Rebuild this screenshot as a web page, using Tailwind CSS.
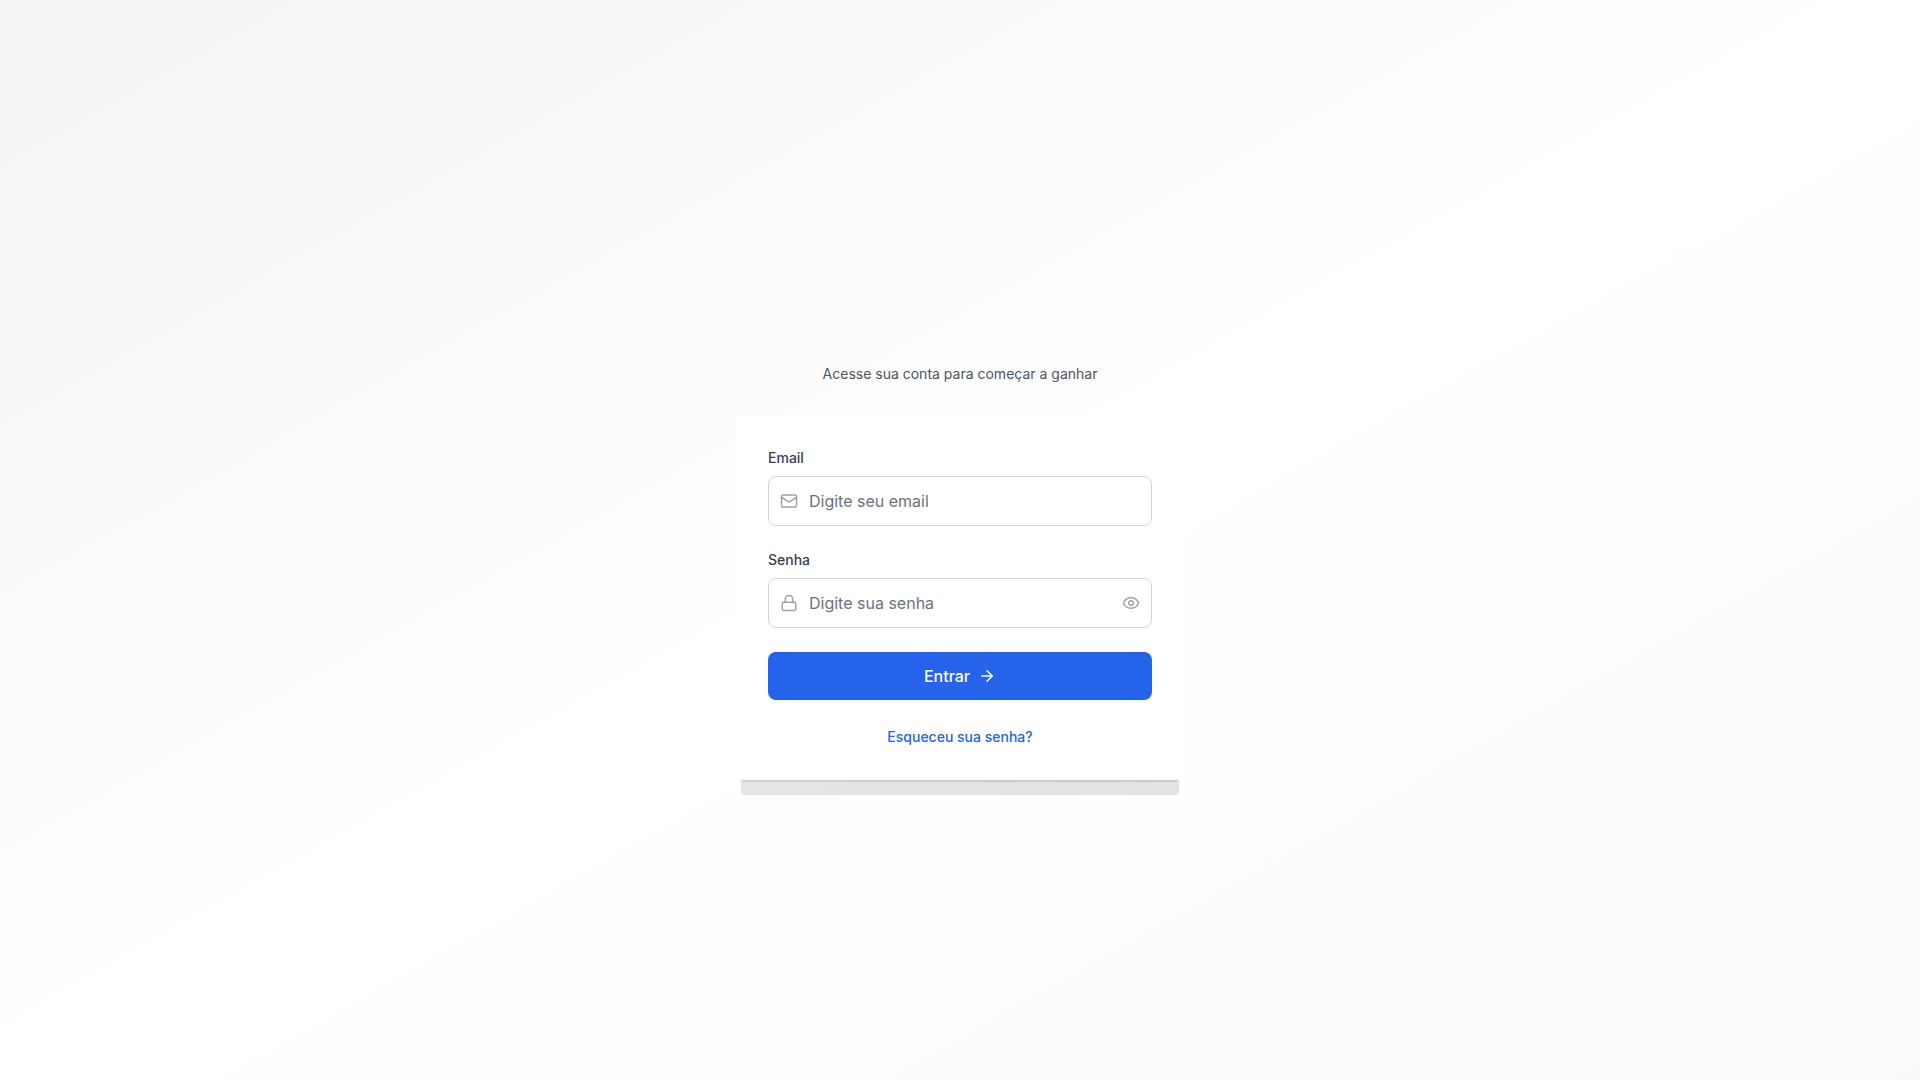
<!DOCTYPE html>
<html lang="pt-BR">
<head>
  <meta charset="UTF-8" />
  <meta name="viewport" content="width=device-width, initial-scale=1" />
  <title>Entrar</title>
  <script src="https://cdn.jsdelivr.net/npm/@tailwindcss/browser@4"></script>
</head>
<body class="min-h-screen flex items-center justify-center bg-linear-to-br/srgb from-[#f3f4f6] via-white to-[#f9fafb] font-['Inter',sans-serif]">
  <main class="w-full max-w-md pt-16">
    <p class="mb-8 text-center text-sm text-[#4b5563]">Acesse sua conta para começar a ganhar</p>

    <div class="p-8 bg-white rounded-lg shadow-[0_20px_0_-5px_rgba(0,0,0,0.1),0_8px_0_-6px_rgba(0,0,0,0.1)]">
      <form class="space-y-6">
        <div>
          <label for="email" class="block mb-2 text-sm font-medium text-[#374151]">Email</label>
          <div class="relative">
            <svg class="absolute left-3 inset-y-0 my-auto size-[18px] text-[#9ca3af]" viewBox="0 0 24 24" fill="none" stroke="currentColor" stroke-width="2" stroke-linecap="round" stroke-linejoin="round" aria-hidden="true">
              <rect width="20" height="16" x="2" y="4" rx="2" />
              <path d="m22 7-8.97 5.7a1.94 1.94 0 0 1-2.06 0L2 7" />
            </svg>
            <input id="email" type="email" placeholder="Digite seu email" class="block w-full px-10 py-3 bg-white border border-[#d1d5db] rounded-lg placeholder:text-[#6b7280]" />
          </div>
        </div>

        <div>
          <label for="password" class="block mb-2 text-sm font-medium text-[#374151]">Senha</label>
          <div class="relative">
            <svg class="absolute left-3 inset-y-0 my-auto size-[18px] text-[#9ca3af]" viewBox="0 0 24 24" fill="none" stroke="currentColor" stroke-width="2" stroke-linecap="round" stroke-linejoin="round" aria-hidden="true">
              <rect width="18" height="11" x="3" y="11" rx="2" ry="2" />
              <path d="M7 11V7a5 5 0 0 1 10 0v4" />
            </svg>
            <input id="password" type="password" placeholder="Digite sua senha" class="block w-full px-10 py-3 bg-white border border-[#d1d5db] rounded-lg placeholder:text-[#6b7280]" />
            <button id="togglePassword" type="button" aria-label="Mostrar senha" class="absolute right-3 inset-y-0 text-[#9ca3af] hover:text-[#4b5563]">
              <svg class="size-[18px]" viewBox="0 0 24 24" fill="none" stroke="currentColor" stroke-width="2" stroke-linecap="round" stroke-linejoin="round" aria-hidden="true">
                <path d="M2.062 12.348a1 1 0 0 1 0-.696 10.75 10.75 0 0 1 19.876 0 1 1 0 0 1 0 .696 10.75 10.75 0 0 1-19.876 0" />
                <circle cx="12" cy="12" r="3" />
              </svg>
            </button>
          </div>
        </div>

        <button type="submit" class="flex w-full items-center justify-center gap-2 py-3 bg-[#2563eb] text-white font-medium rounded-lg hover:bg-[#1d4ed8]">
          Entrar
          <svg class="size-[18px]" viewBox="0 0 24 24" fill="none" stroke="currentColor" stroke-width="2" stroke-linecap="round" stroke-linejoin="round" aria-hidden="true">
            <path d="M5 12h14" />
            <path d="m12 5 7 7-7 7" />
          </svg>
        </button>
      </form>

      <div class="mt-6 text-center">
        <a href="#" class="text-sm font-medium text-[#2563eb] hover:text-[#1d4ed8]">Esqueceu sua senha?</a>
      </div>
    </div>
  </main>

  <script>
    const password = document.getElementById("password");
    const togglePassword = document.getElementById("togglePassword");

    togglePassword.addEventListener("click", () => {
      const hidden = password.type === "password";
      password.type = hidden ? "text" : "password";
      togglePassword.setAttribute("aria-label", hidden ? "Ocultar senha" : "Mostrar senha");
    });
  </script>
</body>
</html>
